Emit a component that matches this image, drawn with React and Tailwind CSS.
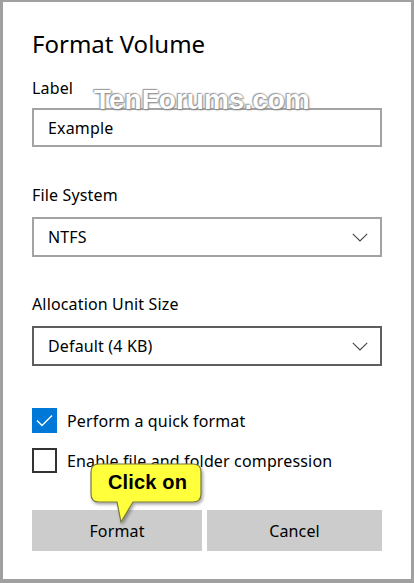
import React from 'react';

function Chevron() {
  return (
    <svg width="16" height="9" viewBox="0 0 16 9" className="shrink-0">
      <path d="M0.8 0.8 L8 8 L15.2 0.8" fill="none" stroke="#444444" strokeWidth="1.1" />
    </svg>
  );
}

function Select({ value, focused }) {
  return (
    <div
      className={`flex items-center justify-between h-[40px] border-2 pl-[14px] pr-[12px] bg-white ${
        focused ? 'border-[#5e5e5e]' : 'border-[#a3a3a3]'
      }`}
    >
      <span className="text-[16px] text-black">{value}</span>
      <Chevron />
    </div>
  );
}

function Callout() {
  return (
    <div className="absolute left-[86px] top-[460px] w-[118px] h-[64px]">
      <svg width="118" height="64" viewBox="0 0 118 64" className="absolute inset-0">
        <defs>
          <filter id="sh" x="-20%" y="-20%" width="140%" height="140%">
            <feDropShadow dx="1.5" dy="2" stdDeviation="1.5" floodColor="#000" floodOpacity="0.35" />
          </filter>
        </defs>
        <path
          d="M10 2 H104 Q112 2 112 10 V32 Q112 40 104 40 H44 L32 60 L28 40 H10 Q2 40 2 32 V10 Q2 2 10 2 Z"
          fill="#ffff3a"
          stroke="#77773a"
          strokeWidth="1.2"
          filter="url(#sh)"
        />
      </svg>
      <span className="absolute left-[19px] top-[8px] text-[20px] leading-[24px] font-bold text-black font-['Liberation_Sans',Arial,sans-serif]">
        Click on
      </span>
    </div>
  );
}

export default function App() {
  return (
    <div className="relative w-[414px] h-[583px] bg-white box-border border-l-[3px] border-t-2 border-r-[3px] border-b-4 border-[#a0a0a0] pl-[29px] pr-[29px] pt-[26px] font-['Noto_Sans',sans-serif] text-black tracking-[0.15px] overflow-hidden">
      <h1 className="text-[24px] leading-[32px] font-normal tracking-normal">Format Volume</h1>

      <div className="mt-[18px] text-[16px] leading-[20px]">Label</div>
      <div className="mt-[10px] h-[39px] border-2 border-[#a3a3a3] flex items-center pl-[14px] text-[16px]">
        Example
      </div>

      <div className="mt-[38px] text-[16px] leading-[20px]">File System</div>
      <div className="mt-[12px]">
        <Select value="NTFS" />
      </div>

      <div className="mt-[37px] text-[16px] leading-[20px]">Allocation Unit Size</div>
      <div className="mt-[12px]">
        <Select value="Default (4 KB)" focused />
      </div>

      <div className="mt-[42px] flex items-center gap-[10px]">
        <div className="w-[25px] h-[25px] bg-[#0078d7] flex items-center justify-center">
          <svg width="17" height="13" viewBox="0 0 17 13">
            <path d="M1 6.5 L6 11.5 L16 1.5" fill="none" stroke="#fff" strokeWidth="1.4" />
          </svg>
        </div>
        <span className="text-[16px] leading-[20px]">Perform a quick format</span>
      </div>

      <div className="mt-[15px] flex items-center gap-[10px]">
        <div className="w-[25px] h-[25px] border-2 border-[#333333] bg-white" />
        <span className="text-[16px] leading-[20px]">Enable file and folder compression</span>
      </div>

      <div className="mt-[37px] flex gap-[5px]">
        <button className="w-[170px] h-[41px] bg-[#cccccc] text-[16px] text-black">Format</button>
        <button className="flex-1 h-[41px] bg-[#cccccc] text-[16px] text-black">Cancel</button>
      </div>

      <Callout />

      <div className="absolute left-[91px] top-[82px] text-[28px] leading-[32px] font-bold text-white tracking-normal font-['Liberation_Sans',Arial,sans-serif] [text-shadow:0_0_2px_#7a7a7a,1px_1px_2px_#8a8a8a,-1px_-1px_1px_#a8a8a8]">
        TenForums.com
      </div>
    </div>
  );
}
